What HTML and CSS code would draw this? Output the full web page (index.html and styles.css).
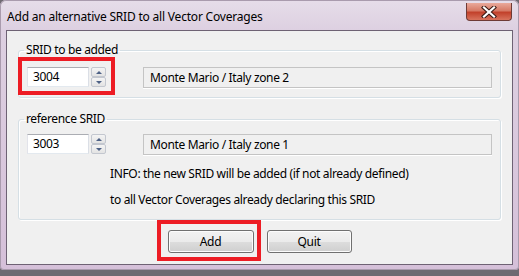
FILE: index.html
```html
<!DOCTYPE html>
<html lang="en">
<head>
    <meta charset="UTF-8">
    <title>Add an alternative SRID to all Vector Coverages</title>
    <link rel="stylesheet" href="styles.css">
</head>
<body>

    <div class="window">
        <div class="titlebar">
            <span class="title">Add an alternative SRID to all Vector Coverages</span>
            <div class="close">
                <svg width="16" height="12" viewBox="0 0 16 12">
                    <path d="M3 1.5 L13 10.5 M13 1.5 L3 10.5" stroke="#3a1a14" stroke-width="4.2" stroke-linecap="square"/>
                    <path d="M3 1.5 L13 10.5 M13 1.5 L3 10.5" stroke="#fff" stroke-width="2.2" stroke-linecap="square"/>
                </svg>
            </div>
        </div>

        <div class="client">
            <fieldset class="group group-add">
                <legend>SRID to be added</legend>
                <div class="row">
                    <div class="spin">
                        <div class="spin-text">3004</div>
                        <div class="spin-arrows">
                            <span class="arrow up"></span>
                            <span class="arrow down"></span>
                        </div>
                    </div>
                    <div class="desc">Monte Mario / Italy zone 2</div>
                </div>
            </fieldset>

            <fieldset class="group group-ref">
                <legend>reference SRID</legend>
                <div class="row">
                    <div class="spin">
                        <div class="spin-text">3003</div>
                        <div class="spin-arrows">
                            <span class="arrow up"></span>
                            <span class="arrow down"></span>
                        </div>
                    </div>
                    <div class="desc">Monte Mario / Italy zone 1</div>
                </div>
                <p class="info">INFO: the new SRID will be added (if not already defined)</p>
                <p class="info">to all Vector Coverages already declaring this SRID</p>
            </fieldset>

            <div class="buttons">
                <button class="btn btn-add">Add</button>
                <button class="btn btn-quit">Quit</button>
            </div>
        </div>

        <!-- red marks drawn over the dialog -->
        <div class="mark mark-srid"></div>
        <div class="mark mark-add"></div>
    </div>

</body>
</html>
```

FILE: styles.css
```css
/* dialog window, Win7 look */
body {
    margin: 0;
    background: #6f6a72;
    font-family: 'Noto Sans', 'Open Sans', sans-serif;
    font-size: 12px;
    letter-spacing: -0.35px;
    color: #000;
}

.window {
    position: relative;
    width: 519px;
    height: 270px;
    box-sizing: border-box;
    padding: 0 6px;
    border-radius: 6px 6px 4px 4px;
    background: linear-gradient(to bottom, #e6dde9 0, #ddd0e1 30px, #d5c0d9 100%);
    box-shadow: inset 0 0 0 1px #a99bad;
}

.titlebar {
    height: 30px;
    display: flex;
    justify-content: space-between;
    align-items: flex-start;
}

.title {
    padding: 8px 0 0 1px;
    line-height: 17px;
    letter-spacing: -0.2px;
}

.close {
    width: 46px;
    height: 18px;
    margin: 3px 1px 0 0;
    box-sizing: border-box;
    border: 1px solid #6e3b36;
    border-top: none;
    border-radius: 0 0 4px 4px;
    background: linear-gradient(to bottom, #e9a99b 0, #d67a66 45%, #c2412b 55%, #d8735d 100%);
    display: flex;
    align-items: center;
    justify-content: center;
}

.client {
    height: 235px;
    box-sizing: border-box;
    border: 1px solid #6e6274;
    background: #f0f0f0;
    padding: 12px 11px 0 11px;
}

/* group boxes */
.group {
    margin: 0;
    padding: 10px 8px 9px 8px;
    border: 1px solid #d5dfe5;
    border-radius: 3px;
    box-shadow: inset 1px 1px 0 #fff, 1px 1px 0 #fff;
}

.group legend {
    padding: 0 2px;
    margin-left: -3px;
    line-height: 14px;
}

.group-ref {
    margin-top: 14px;
    padding-top: 8px;
    padding-bottom: 6px;
}

.row {
    display: flex;
    align-items: flex-start;
}

.spin {
    display: flex;
    gap: 2px;
}

.spin-text {
    width: 62px;
    height: 20px;
    box-sizing: border-box;
    padding-left: 5px;
    line-height: 18px;
    background: #fff;
    border: 1px solid;
    border-color: #abadb3 #dbdfe6 #e3e9ef #e2e3ea;
}

.spin-arrows {
    width: 15px;
    height: 20px;
    display: flex;
    flex-direction: column;
}

.arrow {
    flex: 1;
    box-sizing: border-box;
    border: 1px solid #c3c7cf;
    border-radius: 2px;
    background: linear-gradient(to bottom, #f4f4f4, #e3e3e3);
    display: flex;
    align-items: center;
    justify-content: center;
}

.arrow::after {
    content: '';
    border-left: 3px solid transparent;
    border-right: 3px solid transparent;
}

.arrow.up::after {
    border-bottom: 3px solid #4d6185;
}

.arrow.down::after {
    border-top: 3px solid #4d6185;
}

.desc {
    flex: 1;
    height: 21px;
    box-sizing: border-box;
    margin-left: 37px;
    padding-left: 6px;
    line-height: 19px;
    border: 1px solid #c4c4c4;
    box-shadow: 0 1px 0 #fff;
}

.info {
    margin: 0 0 0 83px;
    line-height: 26px;
}

.info:first-of-type {
    margin-top: 6px;
}

/* buttons */
.buttons {
    display: flex;
    justify-content: center;
    gap: 13px;
    margin-top: 10px;
}

.btn {
    height: 23px;
    padding: 0;
    font-family: inherit;
    font-size: 12px;
    letter-spacing: inherit;
    color: #000;
    border: 1px solid #707070;
    border-radius: 3px;
    background: linear-gradient(to bottom, #f2f2f2 0, #ebebeb 50%, #dddddd 51%, #cfcfcf 100%);
    box-shadow: inset 0 0 0 1px #fcfcfc;
}

.btn-add {
    width: 86px;
}

.btn-quit {
    width: 85px;
}

/* red highlight marks */
.mark {
    position: absolute;
    box-sizing: border-box;
    border: 4px solid #ed1c24;
}

.mark-srid {
    left: 18px;
    top: 57px;
    width: 97px;
    height: 38px;
}

.mark-add {
    left: 157px;
    top: 220px;
    width: 104px;
    height: 41px;
}
```
